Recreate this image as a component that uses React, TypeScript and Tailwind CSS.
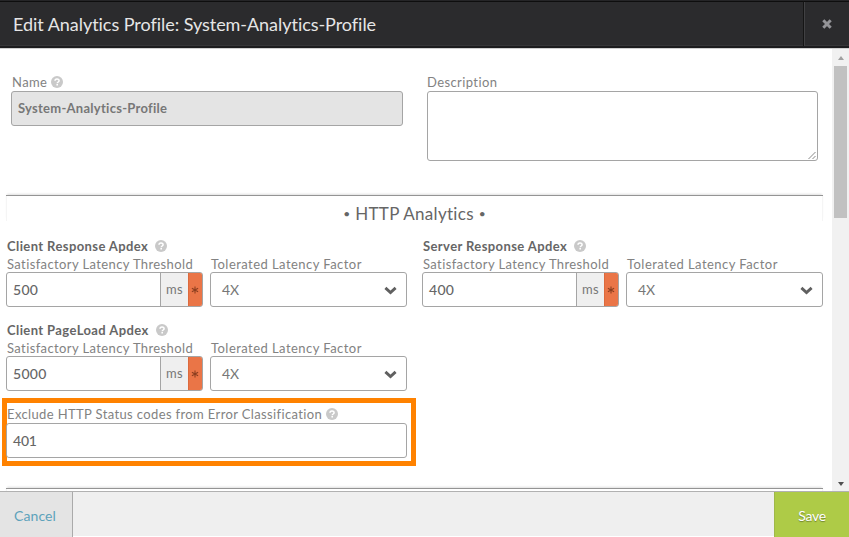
import type { ReactNode } from "react";

function Help({ className = "" }: { className?: string }) {
  return (
    <svg viewBox="0 0 12 12" className={`-mt-px h-3 w-3 shrink-0 ${className}`}>
      <circle cx="6" cy="6" r="6" fill="#c9c9c9" />
      <path d="M4 4.7C4 3.5 4.9 2.9 6 2.9s2.1.7 2.1 1.8C8.1 6 6.2 6 6.2 7.3" fill="none" stroke="#fff" strokeWidth="1.5" />
      <rect x="5.4" y="8" width="1.6" height="1.5" fill="#fff" />
    </svg>
  );
}

function Label({ children }: { children: ReactNode }) {
  return <div className="flex h-[17px] items-center whitespace-nowrap text-[13px] leading-[17px] text-[#828282]">{children}</div>;
}

function SectionRule({ children }: { children?: ReactNode }) {
  return (
    <div className="h-[26px] border-t border-[#949494] bg-[linear-gradient(to_right,#f5f5f5_1px,transparent_1px,transparent_calc(100%-1px),#f5f5f5_calc(100%-1px))] shadow-[0_-2px_2px_-1px_rgba(0,0,0,0.13)]">
      {children}
    </div>
  );
}

function Threshold({ value }: { value: string }) {
  return (
    <div className="w-[197px]">
      <Label><span className="pt-[2px] pl-px tracking-[0.39px]">Satisfactory Latency Threshold</span></Label>
      <div className="flex h-[35px] overflow-hidden rounded-[3px] border border-[#a5a5a5] bg-white text-[14px] leading-[33px]">
        <div className="w-[153px] pl-1.5 font-medium tracking-[0.3px] text-[#666]">{value}</div>
        <div className="w-[28px] border-l border-[#a5a5a5] bg-[#efefef] text-center text-[13px] tracking-[0.3px] text-[#777]">ms</div>
        <div className="-my-px -mr-px flex w-[15px] items-center justify-center rounded-r-[3px] border border-[#dc6a3d] bg-[#ea7547]">
          <svg viewBox="0 0 8 8" className="mr-px h-2 w-2">
            <path d="M4 .5v7M.9 2.2l6.2 3.6M7.1 2.2L.9 5.8" stroke="#8c3f20" strokeWidth="1.1" />
          </svg>
        </div>
      </div>
    </div>
  );
}

function Factor() {
  return (
    <div className="w-[197px]">
      <Label><span className="pt-[2px] pl-px tracking-[0.45px]">Tolerated Latency Factor</span></Label>
      <div className="flex h-[35px] items-center justify-between rounded-[3px] border border-[#a5a5a5] bg-white pr-[9px] pl-[11px] text-[14px] text-[#777]">
        <span className="-mt-px tracking-[-0.2px]">4X</span>
        <svg viewBox="0 0 13 9" className="mt-px h-[9px] w-[13px]">
          <path d="M1.4 1.9l5.1 4.6 5.1-4.6" fill="none" stroke="#606060" strokeWidth="2.9" />
        </svg>
      </div>
    </div>
  );
}

function Apdex({ title, value }: { title: ReactNode; value: string }) {
  return (
    <div className="w-[401px]">
      <div className="flex h-[17px] items-center gap-[7px] pl-px text-[13px] leading-[17px] font-bold text-[#666]">
        {title}
        <Help />
      </div>
      <div className="flex justify-between">
        <Threshold value={value} />
        <Factor />
      </div>
    </div>
  );
}

export default function App() {
  return (
    <div className="flex h-[537px] w-[849px] flex-col overflow-hidden bg-white font-['Lato','Noto_Sans',sans-serif]">
      <header className="flex h-[48px] shrink-0 border-t border-b-2 border-t-[#252527] border-b-[#1c1c1e] bg-[#2b2b2d]">
        <div className="flex flex-1 items-center border-t border-b border-t-[#0e0e0e] border-b-[#363638] pt-[2px] pl-[13px] text-[18px] whitespace-nowrap text-[#e6e6e6]">
          <h1 className="tracking-[-0.04px]">Edit Analytics Profile: System-Analytics-Profile</h1>
        </div>
        <div className="w-[2px] border-t border-l border-t-[#0e0e0e] border-l-[#151515] bg-[#414143]" />
        <button className="flex w-[44px] items-center justify-center border-t border-b border-t-[#0e0e0e] border-b-[#363638] pt-px">
          <svg viewBox="0 0 10 10" className="h-[10px] w-[10px]">
            <path d="M1.3 1.3l7.4 7.4M8.7 1.3L1.3 8.7" stroke="#949498" strokeWidth="3" />
          </svg>
        </button>
      </header>

      <div className="flex min-h-0 flex-1 border-t border-[#cfcfcf]">
        <main className="w-[832px] overflow-hidden">
          <div className="flex gap-[24px] pt-[25px] pl-[11px]">
            <div className="w-[392px]">
              <Label><span className="pl-px tracking-[0.4px]">Name</span><Help className="ml-[4px]" /></Label>
              <div className="h-[35px] rounded-[3px] border border-[#a5a5a5] bg-[#e4e4e4] pl-[6px] text-[13px] leading-[33px] font-bold text-[#777]">
                <span className="tracking-[0.27px]">System-Analytics-Profile</span>
              </div>
            </div>
            <div className="w-[391px]">
              <Label><span className="tracking-[0.4px]">Description</span></Label>
              <div className="flex h-[70px] items-end justify-end rounded-[3px] border border-[#a5a5a5]">
                <svg viewBox="0 0 9 9" className="h-[9px] w-[9px]">
                  <path d="M.5 8L7.5 1M4.5 8l3-3" stroke="#888" strokeWidth="1" />
                </svg>
              </div>
            </div>
          </div>

          <section className="mt-[34px] ml-[6px] w-[817px]">
            <SectionRule>
              <h2 className="flex items-center justify-center gap-[5px] pt-[5px] text-[17px] leading-[24px] text-[#666]">
                <span className="pt-px text-[12px]">•</span>
                <span className="tracking-[0.3px]">HTTP Analytics</span>
                <span className="pt-px text-[12px]">•</span>
              </h2>
            </SectionRule>
            <div className="mt-[17px] flex gap-[15px]">
              <Apdex title={<span className="tracking-[0.4px]">Client Response Apdex</span>} value="500" />
              <Apdex title={<span className="tracking-[0.4px]">Server Response Apdex</span>} value="400" />
            </div>
            <div className="mt-[15px]">
              <Apdex title={<span className="tracking-[0.4px]">Client PageLoad Apdex</span>} value="5000" />
            </div>
            <div className="mt-[7px] -ml-[4px] h-[68px] w-[414px] border-5 border-[#ff8200] pt-[3px] pr-[4px]">
              <Label><span className="tracking-[0.37px]">Exclude HTTP Status codes from Error Classification</span><Help className="ml-[4px]" /></Label>
              <div className="-ml-px h-[35px] rounded-[3px] border border-[#a5a5a5] pl-[6px] text-[14px] leading-[33px] font-medium tracking-[-0.2px] text-[#666]">401</div>
            </div>
            <div className="pt-[22px]">
              <SectionRule />
            </div>
          </section>
        </main>
        <aside className="flex w-[17px] flex-col items-center bg-[#f1f1f1]">
          <div className="mt-[7px] h-0 w-0 border-x-[3.5px] border-b-4 border-x-transparent border-b-[#a0a0a0]" />
          <div className="mt-[6px] h-[152px] w-[13px] bg-[#c1c1c1]" />
          <div className="mt-auto mb-[5px] h-0 w-0 border-x-[3.5px] border-t-4 border-x-transparent border-t-[#505050]" />
        </aside>
      </div>

      <footer className="flex h-[46px] shrink-0 border-t border-[#b1b1b1] bg-[#efefef] text-[14px]">
        <button className="w-[73px] border-r border-[#aaa] bg-[#e4e4e4] pt-px pr-[2px] text-[#5da2bb]"><span className="tracking-[0.1px]">Cancel</span></button>
        <div className="flex-1 border-b border-white" />
        <button className="w-[75px] border-l border-[#9fb84a] bg-[#aecb47] pt-px text-white [text-shadow:0_1px_1px_rgba(0,0,0,0.35)]"><span className="tracking-[-0.3px]">Save</span></button>
      </footer>
    </div>
  );
}
